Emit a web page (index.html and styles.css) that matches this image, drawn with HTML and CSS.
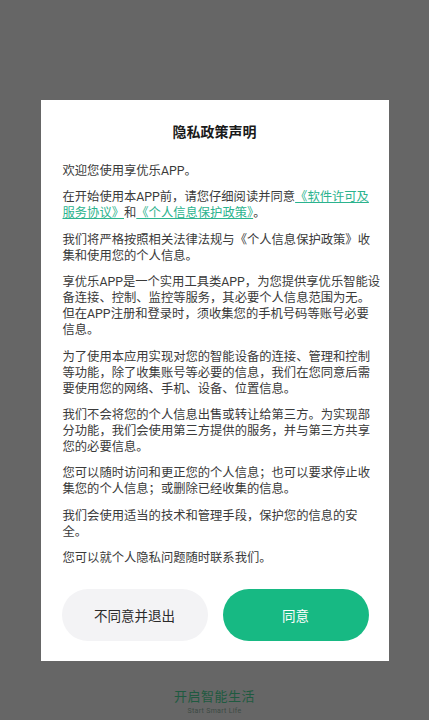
FILE: index.html
```html
<!DOCTYPE html>
<html lang="zh-CN">
<head>
<meta charset="utf-8">
<title>隐私政策声明</title>
<link rel="stylesheet" href="styles.css">
</head>
<body>
<div class="screen">
  <div class="dialog">
    <h1 class="title">隐私政策声明</h1>
    <div class="content">
      <p>欢迎您使用享优乐APP。</p>
      <p>在开始使用本APP前，请您仔细阅读并同意<a class="link">《软件许可及<br>服务协议》</a>和<a class="link">《个人信息保护政策》</a>。</p>
      <p>我们将严格按照相关法律法规与《个人信息保护政策》收<br>集和使用您的个人信息。</p>
      <p>享优乐APP是一个实用工具类APP，为您提供享优乐智能设<br>备连接、控制、监控等服务，其必要个人信息范围为无。<br>但在APP注册和登录时，须收集您的手机号码等账号必要<br>信息。</p>
      <p>为了使用本应用实现对您的智能设备的连接、管理和控制<br>等功能，除了收集账号等必要的信息，我们在您同意后需<br>要使用您的网络、手机、设备、位置信息。</p>
      <p>我们不会将您的个人信息出售或转让给第三方。为实现部<br>分功能，我们会使用第三方提供的服务，并与第三方共享<br>您的必要信息。</p>
      <p>您可以随时访问和更正您的个人信息；也可以要求停止收<br>集您的个人信息；或删除已经收集的信息。</p>
      <p>我们会使用适当的技术和管理手段，保护您的信息的安<br>全。</p>
      <p>您可以就个人隐私问题随时联系我们。</p>
    </div>
    <div class="actions">
      <button class="btn btn-cancel">不同意并退出</button>
      <button class="btn btn-ok">同意</button>
    </div>
  </div>
  <div class="footer">
    <div class="slogan">开启智能生活</div>
    <div class="slogan-en">Start Smart Life</div>
  </div>
</div>
</body>
</html>
```
FILE: styles.css
```css
html, body {
  margin: 0;
  padding: 0;
  background: #666666;
}
body {
  font-family: Roboto, "Noto Sans CJK SC", sans-serif;
  width: 429px;
  height: 720px;
  overflow: hidden;
}
.screen {
  display: flex;
  flex-direction: column;
  align-items: center;
  padding-top: 100px;
}
.dialog {
  width: 348px;
  box-sizing: border-box;
  background: #ffffff;
  padding: 22px 14px 20px 22px;
}
.title {
  margin: 0;
  font-size: 14px;
  line-height: 20px;
  font-weight: 700;
  color: #1a1a1a;
  text-align: center;
  padding-right: 8px;
}
.content {
  margin-top: 21px;
  font-size: 12.3px;
  line-height: 16px;
  color: #3a3a3a;
}
.content p {
  margin: 0 0 10.4px 0;
  white-space: nowrap;
}
.content p:last-child {
  margin-bottom: 0;
}
.link {
  color: #2bb38e;
  text-decoration: underline;
}
.actions {
  display: flex;
  gap: 15px;
  margin-top: 23px;
  padding-right: 6px;
  margin-left: -1px;
}
.btn {
  flex: 1;
  height: 52px;
  border: none;
  border-radius: 26px;
  font-family: Roboto, "Noto Sans CJK SC", sans-serif;
  font-size: 13.5px;
}
.btn-cancel {
  background: #f3f3f5;
  color: #2a2a2a;
}
.btn-ok {
  background: #17b983;
  color: #ffffff;
}
.footer {
  margin-top: 27px;
  display: flex;
  flex-direction: column;
  align-items: center;
}
.slogan {
  font-size: 13px;
  line-height: 18px;
  color: #1f5a40;
  letter-spacing: 0.5px;
}
.slogan-en {
  font-size: 7px;
  line-height: 10px;
  color: #3c4a44;
  letter-spacing: 0.3px;
}
```
